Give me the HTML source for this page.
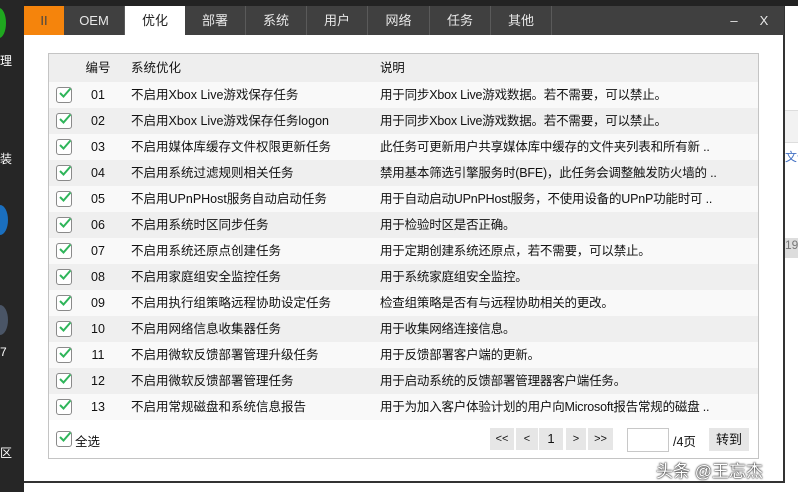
<!DOCTYPE html>
<html><head><meta charset="utf-8"><style>
*{margin:0;padding:0;box-sizing:border-box}
body{width:798px;height:492px;overflow:hidden;background:#fff;font-family:"Liberation Sans","Noto Sans CJK SC",sans-serif;font-size:12.5px;color:#111;position:relative}
.abs{position:absolute;white-space:nowrap}
.tabs{left:24px;top:6px;width:760px;height:29px;background:#404040;}
.tab{position:absolute;top:0;height:29px;line-height:29px;text-align:center;color:#e8e8e8;font-size:13px;border-right:1px solid #5a5a5a}
.row{position:absolute;left:49px;width:709px;height:26px;line-height:26px;white-space:nowrap}
.cb{position:absolute;left:7px;top:5px;width:16px;height:16px;border:1.5px solid #8a8a8a;border-radius:3px;background:#fff}
.cb svg{position:absolute;left:1px;top:-2px}
.num{position:absolute;left:36px;width:26px;text-align:center}
.nm{position:absolute;left:82px}
.ds{position:absolute;left:331px;letter-spacing:-0.2px}
.pb{position:absolute;top:428px;height:22px;line-height:22px;background:#e6e6e6;text-align:center;font-size:11px}
</style></head><body>
<div class="abs" style="left:0;top:0;width:798px;height:6px;background:#232323"></div>
<div class="abs" style="left:0;top:0;width:24px;height:492px;background:#262626"></div>
<div class="abs" style="left:0;top:52px;color:#fff;font-size:12px">理</div>
<div class="abs" style="left:0;top:150px;color:#fff;font-size:12px">装</div>
<div class="abs" style="left:-8px;top:205px;width:16px;height:30px;border-radius:50%;background:#1a6fbf"></div>
<div class="abs" style="left:-8px;top:305px;width:16px;height:30px;border-radius:50%;background:#4a5566"></div>
<div class="abs" style="left:0;top:345px;color:#fff;font-size:12px">7</div>
<div class="abs" style="left:0;top:444px;color:#fff;font-size:12px">区</div>
<div class="abs" style="left:-8px;top:8px;width:14px;height:30px;border-radius:50%;background:#1fa81f"></div>
<div class="abs" style="left:783px;top:6px;width:2px;height:476px;background:#333"></div>
<div class="abs" style="left:24px;top:481px;width:761px;height:2px;background:#333"></div>
<div class="abs" style="left:785px;top:110px;width:13px;height:33px;background:#f2f2f2;border-top:1px solid #ddd;border-bottom:1px solid #ddd"></div>
<div class="abs" style="left:785px;top:148px;color:#4472c4;font-size:12px;overflow:hidden;width:13px">文件</div>
<div class="abs" style="left:785px;top:238px;width:13px;height:20px;background:#ddd;color:#777;font-size:12px;overflow:hidden">19</div>
<div class="abs tabs">
<div class="tab" style="left:0;width:40px;background:#f5840c;color:#444;border:none">II</div>
<div class="tab" style="left:40px;width:61px">OEM</div>
<div class="tab" style="left:101px;width:60px;background:#fff;color:#222;border:none">优化</div>
<div class="tab" style="left:161px;width:61px">部署</div>
<div class="tab" style="left:222px;width:61px">系统</div>
<div class="tab" style="left:283px;width:61px">用户</div>
<div class="tab" style="left:344px;width:62px">网络</div>
<div class="tab" style="left:406px;width:61px">任务</div>
<div class="tab" style="left:467px;width:61px">其他</div>
<div class="tab" style="left:700px;width:20px;border:none">–</div>
<div class="tab" style="left:730px;width:20px;border:none">X</div>
</div>
<div class="abs" style="left:48px;top:53px;width:711px;height:406px;border:1px solid #c4c4c4;background:#fff"></div>
<div class="row" style="top:54px;height:28px;line-height:28px;background:#eeeeee"><span class="num" style="left:33px;width:32px">编号</span><span class="nm">系统优化</span><span class="ds">说明</span></div>
<div id="rows"></div>
<div class="abs" style="left:56px;top:431px;width:16px;height:16px;border:1.5px solid #8a8a8a;border-radius:3px"><svg width="14" height="14" style="position:absolute;left:1px;top:-2px" viewBox="0 0 14 14"><path d="M2 7 L5.5 10.5 L12.5 2.5" stroke="#2fb55a" stroke-width="2" fill="none"/></svg></div>
<div class="abs" style="left:75px;top:431px">全选</div>
<div class="pb" style="left:490px;width:24px">&lt;&lt;</div>
<div class="pb" style="left:516px;width:22px">&lt;</div>
<div class="pb" style="left:539px;width:24px;font-size:13px">1</div>
<div class="pb" style="left:566px;width:20px">&gt;</div>
<div class="pb" style="left:588px;width:25px">&gt;&gt;</div>
<div class="abs" style="left:627px;top:428px;width:42px;height:24px;border:1px solid #c8c8c8;background:#fff"></div>
<div class="abs" style="left:673px;top:431px">/4页</div>
<div class="pb" style="left:709px;width:40px;top:428px;height:23px;line-height:23px;font-size:13px">转到</div>
<div class="abs" style="left:656px;top:457px;font-size:17px;color:#fff;text-shadow:0 0 2px #000,0 0 1px #000">头条 @王忘杰</div>
<script>
var d=[["不启用Xbox Live游戏保存任务","用于同步Xbox Live游戏数据。若不需要，可以禁止。"],
["不启用Xbox Live游戏保存任务logon","用于同步Xbox Live游戏数据。若不需要，可以禁止。"],
["不启用媒体库缓存文件权限更新任务","此任务可更新用户共享媒体库中缓存的文件夹列表和所有新 .."],
["不启用系统过滤规则相关任务","禁用基本筛选引擎服务时(BFE)，此任务会调整触发防火墙的 .."],
["不启用UPnPHost服务自动启动任务","用于自动启动UPnPHost服务，不使用设备的UPnP功能时可 .."],
["不启用系统时区同步任务","用于检验时区是否正确。"],
["不启用系统还原点创建任务","用于定期创建系统还原点，若不需要，可以禁止。"],
["不启用家庭组安全监控任务","用于系统家庭组安全监控。"],
["不启用执行组策略远程协助设定任务","检查组策略是否有与远程协助相关的更改。"],
["不启用网络信息收集器任务","用于收集网络连接信息。"],
["不启用微软反馈部署管理升级任务","用于反馈部署客户端的更新。"],
["不启用微软反馈部署管理任务","用于启动系统的反馈部署管理器客户端任务。"],
["不启用常规磁盘和系统信息报告","用于为加入客户体验计划的用户向Microsoft报告常规的磁盘 .."]];
var h="";
d.forEach(function(r,i){var n=(i+1<10?"0":"")+(i+1);
h+='<div class="row" style="top:'+(82+i*26)+'px;background:'+(i%2?'#efefef':'#f9f9f9')+'"><div class="cb"><svg width="14" height="14" viewBox="0 0 14 14"><path d="M2 7 L5.5 10.5 L12.5 2.5" stroke="#2fb55a" stroke-width="2" fill="none"/></svg></div><span class="num">'+n+'</span><span class="nm">'+r[0]+'</span><span class="ds">'+r[1]+'</span></div>';});
document.getElementById("rows").innerHTML=h;
</script>
</body></html>
